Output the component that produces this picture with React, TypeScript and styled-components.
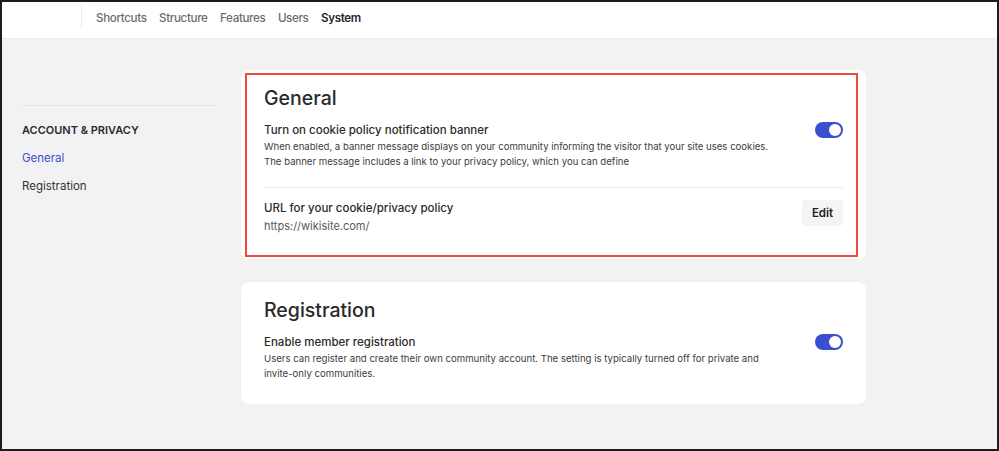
import React, { useState } from 'react'
import styled, { createGlobalStyle } from 'styled-components'

const GlobalStyle = createGlobalStyle`
  html, body {
    margin: 0;
    padding: 0;
    background: #f2f2f2;
  }
  * {
    box-sizing: border-box;
  }
`

const Frame = styled.div`
  width: 999px;
  height: 451px;
  border: 2px solid #1c1c1c;
  background: #f2f2f2;
  font-family: Inter, 'Noto Sans', sans-serif;
  color: #2b2b2b;
  overflow: hidden;
`

const TopBar = styled.header`
  height: 37px;
  background: #ffffff;
  border-bottom: 1px solid #e9e9e9;
  display: flex;
  align-items: center;
`

const LogoSlot = styled.div`
  width: 80px;
  height: 25px;
  border-right: 1px solid #ececec;
  margin-top: -8px;
`

const Nav = styled.nav`
  display: flex;
  gap: 12.5px;
  padding-left: 14px;
  margin-top: -5px;
`

const NavItem = styled.a<{ $active?: boolean }>`
  font-size: 11.6px;
  letter-spacing: -0.35px;
  font-weight: ${(p) => (p.$active ? 600 : 500)};
  color: ${(p) => (p.$active ? '#262626' : '#6d6d6d')};
  text-decoration: none;
  cursor: pointer;
`

const Body = styled.div`
  display: flex;
  padding: 31px 0 0 20px;
  gap: 24px;
`

const Sidebar = styled.aside`
  width: 195px;
  padding-top: 35px;
`

const SideRule = styled.hr`
  border: 0;
  border-top: 1px solid #e2e2e2;
  margin: 0 0 17px;
`

const SideHeading = styled.div`
  font-size: 11px;
  font-weight: 600;
  color: #2a2a2a;
  margin-bottom: 14px;
`

const SideLink = styled.a<{ $active?: boolean }>`
  display: block;
  font-size: 11.5px;
  color: ${(p) => (p.$active ? '#3b50d0' : '#333')};
  margin-bottom: 14px;
  text-decoration: none;
  cursor: pointer;
`

const Cards = styled.div`
  width: 625px;
  display: flex;
  flex-direction: column;
  gap: 23px;
`

const Card = styled.section<{ $highlight?: boolean }>`
  background: #ffffff;
  border-radius: 8px;
  padding: ${(p) => (p.$highlight ? '3px 8px 2px 4px' : '0')};
`

const CardInner = styled.div<{ $highlight?: boolean }>`
  border: ${(p) => (p.$highlight ? '2px solid #ef4b40' : '0')};
  padding: ${(p) => (p.$highlight ? '11px 13px 20px 17px' : '16px 23px 5px 23px')};
`

const CardTitle = styled.h2`
  margin: 0 0 12px;
  font-size: 19.5px;
  font-weight: 500;
  color: #2a2a2a;
  line-height: 24px;
`

const SettingRow = styled.div<{ $divider?: boolean }>`
  display: flex;
  align-items: flex-start;
  justify-content: space-between;
  gap: 20px;
  padding: ${(p) => (p.$divider ? '12px 0 0' : '0 0 18px')};
  border-top: ${(p) => (p.$divider ? '1px solid #ececec' : '0')};
`

const SettingText = styled.div`
  display: flex;
  flex-direction: column;
`

const SettingLabel = styled.div`
  font-size: 11.5px;
  font-weight: 500;
  color: #2a2a2a;
  line-height: 17px;
`

const SettingDesc = styled.div`
  font-size: 9.6px;
  color: #3c3c3c;
  line-height: 15px;
`

const SettingValue = styled.div`
  font-size: 11px;
  color: #5a5a5a;
  line-height: 18px;
`

const Toggle = styled.button<{ $on: boolean }>`
  flex: none;
  width: 28px;
  height: 16px;
  border-radius: 8px;
  border: 0;
  padding: 0;
  background: ${(p) => (p.$on ? '#3a4fd0' : '#c9c9c9')};
  position: relative;
  cursor: pointer;

  &::after {
    content: '';
    position: absolute;
    top: 2px;
    left: ${(p) => (p.$on ? '14px' : '2px')};
    width: 12px;
    height: 12px;
    border-radius: 50%;
    background: #fff;
  }
`

const EditButton = styled.button`
  flex: none;
  width: 41px;
  height: 26px;
  border: 0;
  border-radius: 4px;
  background: #f4f4f4;
  font-family: inherit;
  font-size: 11.5px;
  font-weight: 600;
  color: #222;
  cursor: pointer;
  margin-top: 0;
`

const App = () => {
  const [cookieBanner, setCookieBanner] = useState(true)
  const [registration, setRegistration] = useState(true)

  return (
    <Frame>
      <GlobalStyle />
      <TopBar>
        <LogoSlot />
        <Nav>
          <NavItem>Shortcuts</NavItem>
          <NavItem>Structure</NavItem>
          <NavItem>Features</NavItem>
          <NavItem>Users</NavItem>
          <NavItem $active>System</NavItem>
        </Nav>
      </TopBar>
      <Body>
        <Sidebar>
          <SideRule />
          <SideHeading>ACCOUNT &amp; PRIVACY</SideHeading>
          <SideLink $active>General</SideLink>
          <SideLink>Registration</SideLink>
        </Sidebar>
        <Cards>
          <Card $highlight>
            <CardInner $highlight>
              <CardTitle>General</CardTitle>
              <SettingRow>
                <SettingText>
                  <SettingLabel>Turn on cookie policy notification banner</SettingLabel>
                  <SettingDesc>
                    When enabled, a banner message displays on your community informing the visitor that your site uses cookies.
                    <br />
                    The banner message includes a link to your privacy policy, which you can define
                  </SettingDesc>
                </SettingText>
                <Toggle $on={cookieBanner} onClick={() => setCookieBanner(!cookieBanner)} />
              </SettingRow>
              <SettingRow $divider>
                <SettingText>
                  <SettingLabel>URL for your cookie/privacy policy</SettingLabel>
                  <SettingValue>https://wikisite.com/</SettingValue>
                </SettingText>
                <EditButton>Edit</EditButton>
              </SettingRow>
            </CardInner>
          </Card>
          <Card>
            <CardInner>
              <CardTitle>Registration</CardTitle>
              <SettingRow>
                <SettingText>
                  <SettingLabel>Enable member registration</SettingLabel>
                  <SettingDesc>
                    Users can register and create their own community account. The setting is typically turned off for private and
                    <br />
                    invite-only communities.
                  </SettingDesc>
                </SettingText>
                <Toggle $on={registration} onClick={() => setRegistration(!registration)} />
              </SettingRow>
            </CardInner>
          </Card>
        </Cards>
      </Body>
    </Frame>
  )
}

export default App
